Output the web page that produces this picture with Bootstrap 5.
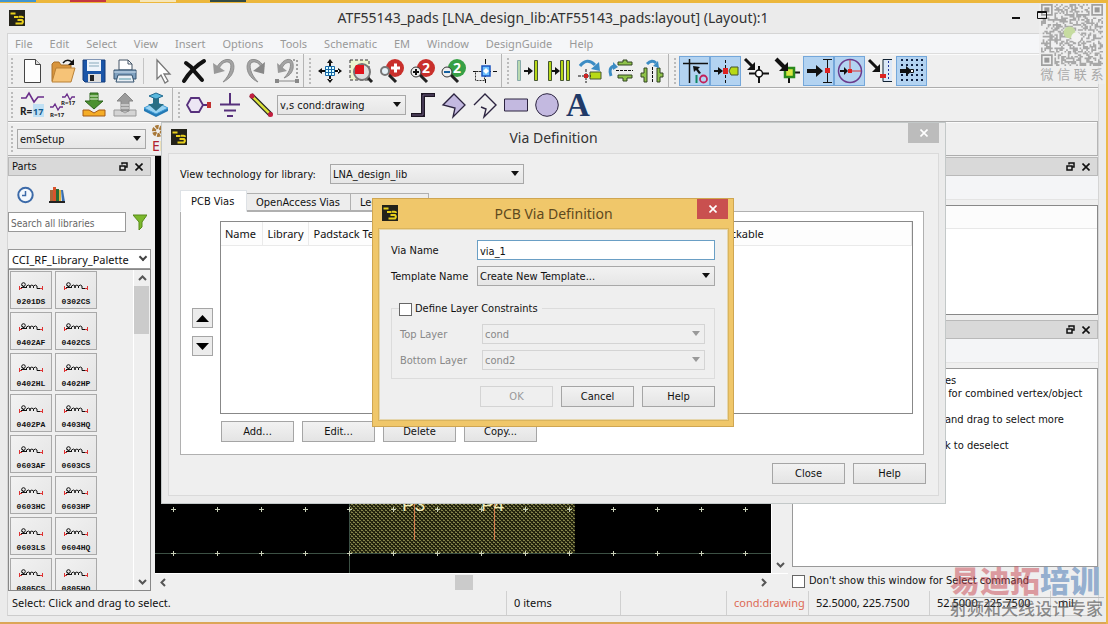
<!DOCTYPE html>
<html lang="en">
<head>
  <meta charset="UTF-8" />
  <meta name="viewport" content="width=device-width, initial-scale=1" />
  <title>ATF55143_pads (Layout):1</title>
  <link href="https://cdn.jsdelivr.net/npm/bootstrap@5.3.3/dist/css/bootstrap.min.css" rel="stylesheet" />
  <style>
    :root {
      --ui: "DejaVu Sans Condensed", "DejaVu Sans", sans-serif;
      --win: "Noto Sans", sans-serif;
      --line: #adadad;
    }
    body { font: 11px/14px var(--ui); color: #111; background: #ebebeb; height: 100vh; overflow: hidden; }
    svg { display: block; flex: none; }
    button { color: inherit; }

    /* window frame */
    .desk-top { height: 3px; background: #ecb73c; flex: none; gap: 34px; }
    .desk-top i { height: 2px; width: 36px; }
    .frame { border-right: 2px solid #ecb94a; min-height: 0; }
    .title-bar { height: 30px; padding: 0 45px 0 9px; flex: none; }
    .title-text { font: 14px/20px var(--win); color: #333; }
    .title-bar .title-text { padding-left: 72px; }
    .win-ctl { border: 0; background: none; padding: 0; width: 26px; height: 20px; position: relative; z-index: 5; }
    .inner { margin: 0 7px; border: 1px solid #d5d5d5; border-bottom-color: #ccc; background: #efefef; min-height: 0; }
    .menu-bar { height: 20px; background: #f5f6f8; padding-left: 7px; gap: 17px; border-bottom: 1px solid #ddd; flex: none; }
    .menu-bar a { font: 11px/19px var(--win); color: #999; text-decoration: none; }

    /* toolbars */
    .tool-row { height: 34px; border-bottom: 1px solid var(--line); box-shadow: inset 0 1px #fbfbfb; flex: none; }
    .tool-set { padding-left: 8px; border-right: 1px solid #b5b5b5; padding-right: 1px; }
    .tool-set + .tool-set { padding-left: 10px; }
    .tool-set.open-end { border-right: 0; }
    .tool-set::before { content: ""; width: 2px; height: 26px; margin-left: -5px; margin-right: 3px; background: repeating-linear-gradient(#bbb 0 2px, transparent 2px 4px); }
    .tool-btn { width: 31px; height: 30px; padding: 0; border: 1px solid transparent; background: none; display: flex; align-items: center; justify-content: center; flex: none; }
    .tool-btn svg { overflow: visible; }
    .tool-btn.on { background: #b3d3f1; border-color: #74a7da; }
    .tool-sep { width: 7px; height: 26px; border-left: 1px solid #c4c4c4; margin-left: 3px; margin-right: -3px; }
    .tool-pick { width: 129px; margin: 0 1px; }

    /* form controls */
    .form-select, .form-control { font: 11px/16px var(--ui); color: #111; border: 1px solid #a8a8a8; border-radius: 0; height: 20px; padding: 2px 2px 0; min-height: 0; }
    .form-select { appearance: none; background: linear-gradient(#f2f2f2, #e6e6e6); padding-right: 20px; }
    .form-select:disabled { background: #efefef; border-color: #d4d4d4; color: #888; }
    .pick { position: relative; }
    .pick::after { content: ""; position: absolute; right: 5px; top: 50%; margin-top: -3px; border: 4px solid transparent; border-top: 5px solid #111; border-bottom: 0; pointer-events: none; }
    .pick.dim::after { border-top-color: #999; }
    .pick.chevron::after { width: 6px; height: 6px; border: solid #444; border-width: 0 2px 2px 0; transform: rotate(45deg); margin-top: -5px; }
    .push { width: 73px; height: 21px; padding: 1px 0 0; font: 11px/14px var(--ui); border: 1px solid #a5a5a5; border-radius: 0; background: linear-gradient(#f2f2f2, #e4e4e4); color: #111; }
    .push:disabled { background: #efefef; border-color: #d4d4d4; color: #999; opacity: 1; }
    .nudge { width: 21px; height: 20px; padding: 0; border: 1px solid #a5a5a5; background: #ececec; display: grid; place-items: center; }
    .form-check-input { width: 13px; height: 13px; margin: 0; border: 1px solid #666; border-radius: 0 !important; flex: none; }

    /* docks */
    .dock-title { height: 19px; margin-top: 1px; background: #d9d9d9; border: 1px solid #b9b9b9; padding: 0 3px; flex: none; }
    .dock-title button { border: 0; background: none; padding: 0; width: 16px; height: 16px; display: grid; place-items: center; }
    .parts { width: 143px; flex: none; }
    .parts .form-select, .parts .form-control { border-color: #999; }
    .finder { padding: 9px 1px 0 9px; gap: 15px; }
    .finder button, .search button { border: 0; background: none; padding: 0; }
    .search { padding: 7px 4px 17px 0; }
    .search .form-control { width: 118px; font-size: 10px; }
    .search .form-control::placeholder { color: #666; }
    .palette .form-select { font: 11px/16px var(--win); background: #fff; padding: 2px 3px 0; }
    .part-box { border: 1px solid #888; min-height: 0; }
    .part-grid { padding: 1px; display: grid; grid-template-columns: 42px 42px; grid-auto-rows: 38px; gap: 3px; align-content: start; overflow: hidden; }
    .part { border: 1px solid #a9a9a9; background: linear-gradient(135deg, #f2f2f2, #e4e4e4); padding: 5px 0 0; font: bold 8px/12px "Liberation Mono", monospace; }
    .part svg { margin: 4px auto 5px; }
    .v-bar { width: 17px; border-left: 1px solid #fff; flex: none; }
    .v-thumb { width: 15px; height: 48px; background: #cbcbcb; }
    .scroll-end { height: 16px; display: grid; place-items: center; }
    .canvas-area { background: #000; overflow: hidden; }
    .h-bar { height: 18px; border-top: 1px solid #fff; }
    .h-thumb { width: 18px; height: 15px; background: #cbcbcb; }
    .right-dock { width: 306px; flex: none; }
    .strip { height: 24px; background: #f4f5f7; border-bottom: 1px solid #e4e4e4; flex: none; }
    .list-box { height: 110px; margin-top: 5px; margin-bottom: 4px; border: 1px solid #888; background: #fff; flex: none; }
    .list-head { height: 23px; background: #fcfcfc; border-bottom: 1px solid #e8e8e8; }
    .help-box { border: 1px solid #999; background: #fff; margin-top: 5px; padding: 5px 2px 0 152px; line-height: 13px; white-space: pre; min-height: 0; overflow: hidden; }
    .no-show { height: 24px; flex: none; gap: 4px; padding-top: 4px; }
    .status { height: 24px; font: 11px/16px var(--win); flex: none; }
    .status > div { border-left: 1px solid #d0d0d0; padding: 4px 0 4px 7px; }
    .status > div:first-child { border: 0; padding-left: 4px; }
    .status .item-cell { width: 114px; }
    .status .blank-cell { width: 106px; }
    .status .layer-cell { width: 82px; color: #dd6a55; white-space: nowrap; }
    .status .xy-cell { width: 121px; }
    .status .unit-cell { width: 48px; }
    .desk-foot { height: 8px; border-bottom: 2px solid #dba657; flex: none; }

    /* dialogs */
    .dlg { position: absolute; display: flex; flex-direction: column; }
    .dlg-title { height: 30px; flex: none; position: relative; }
    .dlg-x { position: absolute; top: 0; right: 0; width: 31px; height: 20px; border: 0; padding: 0; display: grid; place-items: center; background: #bcbcbc; }
    .dlg-logo { position: absolute; left: 3px; top: 6px; }
    .via-dlg { left: 161px; top: 122px; width: 785px; height: 382px; background: #ebebeb; border: 1px solid #c3c8c8; padding: 0 6px 7px; }
    .dlg-body { background: #efefef; border: 1px solid #dadada; padding: 10px 14px 0 11px; }
    .lib-row label { width: 150px; padding-top: 1px; }
    .lib-row .pick { width: 194px; }
    .nav-tabs { border: 0; margin-top: 6px; align-items: end; }
    .nav-tabs .nav-link { font: 11px/14px var(--ui); color: #111; border: 1px solid #b0b0b0; border-radius: 0; height: 18px; padding: 1px 0 0 9px; margin: 0 0 0 -1px; background: #ededed; }
    .nav-tabs .nav-link.active { width: 67px; height: 22px; padding: 2px 0 0 10px; margin: 0 0 -1px; border-bottom-color: #fff; background: #fff; color: #111; position: relative; z-index: 1; }
    .nav-tabs .oa-tab { width: 105px; }
    .nav-tabs .legacy-tab { width: 79px; }
    .tab-pane-box { height: 244px; border: 1px solid #b0b0b0; background: #fff; padding: 9px 10px 0 11px; }
    .arrows { width: 28px; padding-top: 87px; gap: 8px; flex: none; }
    .via-table { height: 193px; border: 1px solid #888; min-width: 0; }
    .via-table table { width: 100%; table-layout: fixed; margin: 0; }
    .via-table th { font: 11px/15px var(--win); padding: 4px 0 4px 5px; border-right: 1px solid #eaeaea; border-bottom: 1px solid #eaeaea; background: #fdfdfd; white-space: nowrap; overflow: hidden; }
    .via-table th:first-child { padding-left: 4px; }
    .via-actions { padding: 7px 0 0 29px; gap: 8px; }
    .end-row { padding-top: 8px; gap: 8px; }
    .via-dlg .end-row { margin-right: -2px; }

    .pcb-dlg { left: 372px; top: 198px; width: 362px; height: 229px; background: #f0c76a; border: 1px solid #cfa652; padding: 0 5px 6px 6px; }
    .pcb-dlg .title-text { color: #5e4a1e; }
    .pcb-dlg .dlg-x { background: #c9504f; }
    .pcb-body { background: #efefef; border: 1px solid #e5d6ae; outline: 1px solid #dbb55d; padding: 10px 12px 0 11px; }
    .pair { height: 26px; align-items: flex-start; }
    .pair label { width: 86px; line-height: 22px; flex: none; }
    .pair .form-control { border-color: #6a9fc5; }
    .limits { position: relative; border: 1px solid #dcdcdc; margin-top: 16px; height: 71px; padding: 15px 9px 0 8px; }
    .limits .pair label { width: 82px; color: #888; }
    .limits legend { position: absolute; top: -7px; left: 7px; width: auto; margin: 0; padding: 0 4px 0 0; background: #efefef; font: 11px/14px var(--ui); display: flex; gap: 3px; align-items: center; }
    .pcb-dlg .end-row { padding-top: 7px; }

    /* stamps over the window */
    .stamp { position: absolute; pointer-events: none; }
    .qr-stamp { left: 1039px; top: 4px; width: 66px; background: rgba(240, 240, 240, .7); text-align: center; font: 13px/18px "Liberation Sans", "Noto Sans CJK SC", sans-serif; color: #aaa; white-space: nowrap; }
    .brand-stamp { left: 950px; top: 566px; width: 154px; white-space: nowrap; font-family: "Liberation Sans", "Noto Sans CJK SC", sans-serif; }
    .brand-stamp b { display: block; font-size: 30px; line-height: 31px; font-weight: 900; color: rgba(200, 70, 80, .5); border-bottom: 1px solid #bbb; }
    .brand-stamp b span { color: rgba(70, 120, 180, .55); }
    .brand-stamp em { display: block; font-style: normal; font-weight: 500; font-size: 17px; line-height: 24px; color: rgba(80, 80, 80, .65); }
  </style>
</head>
<body class="d-flex flex-column">
  <svg width="0" height="0" class="position-absolute">
    <symbol id="logo" viewBox="0 0 16 16"><rect width="16" height="16" fill="#23221a"/><path d="M1.500 3.500h5M5 7h4.500M10 6.800h2.500q1.500 0 1.500 1.200M8.500 10h4.500q1.800 1.800 0 3.600H6.500" fill="none" stroke="#e8cf1c" stroke-width="2"/></symbol>
    <symbol id="float" viewBox="0 0 9 9"><path d="M3 2.500V1h5v4H6.500M1 4h5v4H1z" fill="none" stroke="#111" stroke-width="1.500"/></symbol>
    <symbol id="cross" viewBox="0 0 8 8"><path d="M.5.5l7 7M7.500.5l-7 7" stroke="currentColor" stroke-width="1.600"/></symbol>
    <symbol id="coil" viewBox="0 0 26 9"><path d="M1.500 4v4M24.500 4v4M1 6.500h3M22 6.500h3" stroke="#d33" fill="none"/><path d="M3 5.500h6M3.500 3L7 5.500M8.500 6V4q2-2 3.500 0v2V4q2-2 3.500 0v2V4q2-2 3.500 0v2.500h3" stroke="#111" fill="none"/><circle cx="5.500" cy="2.500" r="1.800" fill="none" stroke="#111"/></symbol>
    <symbol id="up" viewBox="0 0 9 6"><path d="M1 5l3.500-3.500L8 5" fill="none" stroke="#555" stroke-width="2"/></symbol>
    <symbol id="down" viewBox="0 0 9 6"><path d="M1 1l3.500 3.500L8 1" fill="none" stroke="#555" stroke-width="2"/></symbol>
  </svg>

  <div class="desk-top d-flex">
    <i style="background:#3f95cf"></i><i style="background:#c53640"></i><i style="background:#f6e6b8"></i><i style="background:#334a44"></i>
  </div>

  <div class="frame d-flex flex-column flex-grow-1">
    <div class="title-bar d-flex align-items-center">
      <svg width="16" height="16"><use href="#logo"/></svg>
      <div class="title-text flex-grow-1 text-center">ATF55143_pads [LNA_design_lib:ATF55143_pads:layout] (Layout):1</div>
      <button class="win-ctl" aria-label="Minimize"><svg width="20" height="16"><path d="M3 8h8" stroke="#111" stroke-width="2"/></svg></button>
      <button class="win-ctl" aria-label="Maximize"><svg width="14" height="16"><path d="M2.500 1.500h9v7h-9zM3 2.500h9" fill="none" stroke="#111"/></svg></button>
    </div>

    <div class="inner d-flex flex-column flex-grow-1">
      <nav class="menu-bar d-flex">
        <a href="#">File</a><a href="#">Edit</a><a href="#">Select</a><a href="#">View</a><a href="#">Insert</a><a href="#">Options</a><a href="#">Tools</a><a href="#">Schematic</a><a href="#">EM</a><a href="#">Window</a><a href="#">DesignGuide</a><a href="#">Help</a>
      </nav>

      <div class="tool-row d-flex">
        <div class="tool-set d-flex align-items-center">
          <button class="tool-btn" aria-label="New"><svg width="24" height="24"><path d="M4.500.5h11l5 5v18h-16z" fill="#fdfdfd" stroke="#444"/><path d="M15.500.5v5h5" fill="#ddd" stroke="#444"/></svg></button>
          <button class="tool-btn" aria-label="Open"><svg width="24" height="24"><path d="M1 22V5l2-2h5l2 3h10v4" fill="#d9953c" stroke="#a8702a"/><path d="M1 23L5 9h19l-4 14z" fill="#f6c377" stroke="#b98036"/><path d="M12 4q4-5 9-1" fill="none" stroke="#111" stroke-width="1.500"/><path d="M23 0v6h-6z" fill="#111"/></svg></button>
          <button class="tool-btn" aria-label="Save"><svg width="24" height="24"><path d="M1 1h22v22H3l-2-2z" fill="#1a55a8" stroke="#123a78"/><path d="M5 1h14v11H5z" fill="#eef4fa"/><path d="M7 4h10M7 7h10" stroke="#8ab"/><path d="M6 15h13v8H6z" fill="#ddd"/><path d="M8 16h4v6H8z" fill="#222"/></svg></button>
          <button class="tool-btn" aria-label="Print"><svg width="24" height="24"><path d="M6 11V1h9l4 4v6z" fill="#fff" stroke="#456"/><path d="M15 1v4h4" fill="none" stroke="#456"/><path d="M1 11h22v9H1z" fill="#7ea0bf" stroke="#34536e"/><path d="M1 13h22" stroke="#cfe0ef"/><path d="M5 16h14l2 7H3z" fill="#e8eef4" stroke="#34536e"/><path d="M6 20h12" stroke="#59a"/></svg></button>
          <span class="tool-sep"></span>
          <button class="tool-btn" aria-label="Pointer"><svg width="24" height="24"><path d="M6 1v19l4-4 4 8 3-2-4-7h6z" fill="#fff" stroke="#777" stroke-width="1.300"/></svg></button>
          <button class="tool-btn" aria-label="Delete"><svg width="24" height="24"><path d="M4 4l5 4 4 5 7 8" stroke="#111" stroke-width="4" fill="none" stroke-linecap="round"/><path d="M22 2Q10 9 2 22" stroke="#111" stroke-width="4" fill="none" stroke-linecap="round"/></svg></button>
          <button class="tool-btn" aria-label="Undo"><svg width="24" height="24"><path d="M6 10C9 2 15 2 17 4s1 11-7 19C23 17 22 5 19 2S8 0 4 8z" fill="#a4a4a4" stroke="#8d8d8d"/><path d="M0 4l1 11 11-3z" fill="#999"/></svg></button>
          <button class="tool-btn" aria-label="Redo"><svg width="24" height="24"><path d="M18 10C15 2 9 2 7 4S6 15 14 23C1 17 2 5 5 2S16 0 20 8z" fill="#a4a4a4" stroke="#8d8d8d"/><path d="M21 3l-1 12-11-3z" fill="#888"/></svg></button>
          <button class="tool-btn" aria-label="Undo list"><svg width="24" height="24"><path d="M7 9c3-6 7-6 8-5s1 8-6 15C20 15 19 5 17 2S8 0 5 7z" fill="#a4a4a4" stroke="#8d8d8d"/><path d="M2 4l1 10 9-2z" fill="#999"/><path d="M18 1h4v21" fill="none" stroke="#555" stroke-dasharray="2 2"/><path d="M1 22h21" stroke="#888"/><path d="M0 20h4v4H0zM20 20h4v4h-4z" fill="#888"/></svg></button>
        </div>
        <div class="tool-set d-flex align-items-center">
          <button class="tool-btn" aria-label="View all"><svg width="24" height="24"><path d="M12 0l3 4h-6zM12 24l3-4h-6zM0 12l4-3v6zM24 12l-4-3v6zM11 3h2v4h-2zM11 17h2v4h-2zM3 11h4v2H3zM17 11h4v2h-4z" fill="#111"/><path d="M7.500 7.500h9v9h-9zM10.500 7.500v9M13.500 7.500v9M7.500 10.500h9M7.500 13.500h9" fill="#dff" stroke="#1768a8"/></svg></button>
          <button class="tool-btn" aria-label="Zoom area"><svg width="24" height="24"><path d="M1 1h19v20H1z" fill="#edf5cf" stroke="#333" stroke-dasharray="3 2"/><path d="M18 18l5 5" stroke="#222" stroke-width="3"/><circle cx="13" cy="13" r="8" fill="#ddd" stroke="#777" stroke-width="2"/><path d="M7 6h8v9H6V8z" fill="#e0141b"/></svg></button>
          <button class="tool-btn" aria-label="Zoom in"><svg width="24" height="24"><circle cx="15" cy="9" r="9" fill="#c9302c"/><path d="M11 9h9M15.500 4.500v9" stroke="#fff" stroke-width="3"/><path d="M9 16l7 7" stroke="#222" stroke-width="3"/><circle cx="5" cy="12" r="4" fill="#e6f2f8" stroke="#777" stroke-width="2"/></svg></button>
          <button class="tool-btn" aria-label="Zoom in by 2"><svg width="24" height="24"><circle cx="15" cy="9" r="9" fill="#c9302c"/><text x="11" y="14" font-family="Noto Sans" font-weight="700" font-size="14" fill="#fff">2</text><path d="M9 16l7 7" stroke="#222" stroke-width="3"/><circle cx="5" cy="13" r="5" fill="#eee" stroke="#333"/><path d="M2 13h6M5 10v6" stroke="#111" stroke-width="2"/></svg></button>
          <button class="tool-btn" aria-label="Zoom out by 2"><svg width="24" height="24"><circle cx="15" cy="9" r="9" fill="#37a045"/><text x="11" y="14" font-family="Noto Sans" font-weight="700" font-size="14" fill="#fff">2</text><path d="M9 16l7 7" stroke="#222" stroke-width="3"/><circle cx="5" cy="13" r="5" fill="#eee" stroke="#333"/><path d="M2 13h6" stroke="#1360a0" stroke-width="2"/></svg></button>
          <button class="tool-btn" aria-label="Pan"><svg width="24" height="24"><path d="M12.500 0v24M0 12.500h24" stroke="#111" stroke-dasharray="5 2 1 2"/><path d="M2.500 12.500h9v9h-9z" fill="none" stroke="#333" stroke-dasharray="2 1"/><path d="M9 7h8v10H9z" fill="#6cc0ff" stroke="#1b54c0" stroke-width="1.500"/><path d="M13 9l3 3-3 3-3-3z" fill="#fff"/></svg></button>
        </div>
        <div class="tool-set d-flex align-items-center">
          <button class="tool-btn" aria-label="Move"><svg width="24" height="24"><path d="M1.500 1.500h3v20h-3z" fill="#b9d9b0" stroke="#8aa"/><path d="M18.500 1.500h3v20h-3z" fill="#b8d916" stroke="#453"/><path d="M8 11h4V8l5 4-5 4v-3H8z" fill="#111"/></svg></button>
          <button class="tool-btn" aria-label="Copy"><svg width="24" height="24"><path d="M1.500 2.500h3v19h-3zM13.500 1.500h3v20h-3zM19.500 1.500h3v20h-3z" fill="#b8d916" stroke="#453"/><path d="M5 11h3V8l5 4-5 4v-3H5z" fill="#111"/></svg></button>
          <button class="tool-btn" aria-label="Rotate"><svg width="24" height="24"><path d="M2 7q7-9 15-1" fill="none" stroke="#3c8cc4" stroke-width="3"/><path d="M21 3l1 9-9-2z" fill="#3c8cc4"/><path d="M12 13h11v7H12z" fill="#b8d916" stroke="#453"/><path d="M0 17h13M8 10v14" stroke="#111" stroke-dasharray="3 1"/><path d="M6 15h4v4H6z" fill="#c22"/></svg></button>
          <button class="tool-btn" aria-label="Mirror about X"><svg width="24" height="24"><path d="M9 6V3h5V1h4v2h5v3zM9 19v-3h14v3h-5v3h-4v-3z" fill="#8fc34a" stroke="#342"/><path d="M7 11.500h17" stroke="#111" stroke-dasharray="3 1"/><path d="M2 17Q-1 9 5 7" fill="none" stroke="#3c8cc4" stroke-width="3"/><path d="M4 3l5 5-5 3z" fill="#3c8cc4"/></svg></button>
          <button class="tool-btn" aria-label="Mirror about Y"><svg width="24" height="24"><path d="M4 9h3v14H4v-5H1v-4h3zM17 9h3v5h3v4h-3v5h-3z" fill="#8fc34a" stroke="#342"/><path d="M12.500 8v16" stroke="#111" stroke-dasharray="3 1"/><path d="M7 5q5-5 9-1" fill="none" stroke="#3c8cc4" stroke-width="3"/><path d="M18 2l1 7-6-2z" fill="#3c8cc4"/></svg></button>
        </div>
        <div class="tool-set open-end d-flex align-items-center">
          <button class="tool-btn on" aria-label="Origin"><svg width="28" height="26"><path d="M8.500 1v24M2 5.500h25" stroke="#111" stroke-width="1.500"/><path d="M12 8l7 1-2 2 3 4-2 1-3-4-2 2z" fill="#111"/><path d="M15.500 17v8" stroke="#186" stroke-width="2"/><circle cx="22.500" cy="21" r="3.500" fill="none" stroke="#c2205a" stroke-width="1.800"/></svg></button>
          <button class="tool-btn on" aria-label="Snap to pin"><svg width="24" height="24"><path d="M11.500 1v23" stroke="#111" stroke-dasharray="3 2"/><path d="M0 11h4V8l5 4-5 4v-3H0z" fill="#111"/><path d="M9 9h5v6H9z" fill="#d22"/><path d="M24 8h-7l-2 4 2 4h7z" fill="#b8d916" stroke="#453"/></svg></button>
          <button class="tool-btn" aria-label="Snap to vertex"><svg width="24" height="24"><path d="M0 0l8 8" stroke="#111" stroke-width="3"/><path d="M10 3v8H2z" fill="#111"/><path d="M14 7v17M4 14.500h20" stroke="#111" stroke-width="2"/><circle cx="14" cy="14.500" r="3.500" fill="#fff" stroke="#111" stroke-width="1.500"/></svg></button>
          <button class="tool-btn" aria-label="Snap to edge"><svg width="24" height="24"><path d="M0 0l9 9" stroke="#111" stroke-width="4"/><path d="M13 14v10M14 13.500h10" stroke="#111" stroke-width="2"/><path d="M9 9h9v9H9z" fill="#d8e640" stroke="#2b8a1c" stroke-width="2.500"/><path d="M12 3v9H3z" fill="#111"/></svg></button>
          <button class="tool-btn on" aria-label="Snap to middle"><svg width="26" height="26"><path d="M1 11h9V7l7 6-7 6v-4H1z" fill="#111"/><path d="M17 1.500h9M17 24.500h9M21.500 1v24" stroke="#111"/><path d="M19 10h5v5h-5z" fill="#d22"/></svg></button>
          <button class="tool-btn on" aria-label="Snap to centre"><svg width="26" height="26"><circle cx="13" cy="13" r="11.500" fill="none" stroke="#6a3a8c" stroke-width="1.500"/><path d="M13 2v11h11" fill="none" stroke="#d33"/><path d="M3 12h4V9l4 4-4 4v-3H3z" fill="#111"/><path d="M11 11h4v4h-4z" fill="#d22"/></svg></button>
          <button class="tool-btn" aria-label="Snap to intersection"><svg width="24" height="24"><path d="M0 1l8 8" stroke="#111" stroke-width="3"/><path d="M11 5v8H3z" fill="#111"/><path d="M23 .5h-9v22h9" fill="#dbe8f8" stroke="#123"/><path d="M19.500 2v20" stroke="#239" stroke-dasharray="2 2"/><path d="M11 15h6v4h-6z" fill="#d22"/></svg></button>
          <button class="tool-btn on" aria-label="Snap to grid"><svg width="26" height="26"><path d="M3 1v24M8 1v24M13 1v24M18 1v24M23 1v24" stroke="#124" stroke-width="2" stroke-dasharray="2 3"/><path d="M1 11h6V8l6 5-6 5v-3H1z" fill="#111"/><path d="M11.500 11.500h3v3h-3z" fill="#fff" stroke="#111"/></svg></button>
        </div>
      </div>

      <div class="tool-row d-flex">
        <div class="tool-set d-flex align-items-center">
          <button class="tool-btn" aria-label="Edit value"><svg width="24" height="26"><path d="M1 6h5l3-5 5 9 4-5h6" fill="none" stroke="#6a2d8a" stroke-width="1.600"/><rect x="13" y="12" width="11" height="13" fill="#bfe0f4"/><text x="0" y="23" font-family="Noto Sans" font-weight="700" font-size="10" fill="#222">R=</text><text x="13" y="23" font-family="Noto Sans" font-weight="700" font-size="9" fill="#125a8c">17</text></svg></button>
          <button class="tool-btn" aria-label="Edit values"><svg width="26" height="26"><path d="M12 5h3l2-3 3 6 2-3h3M0 15h3l2-3 3 6 2-3h3" fill="none" stroke="#6a2d8a" stroke-width="1.300"/><text x="11" y="13" font-family="Noto Sans" font-weight="700" font-size="6" fill="#222">R=17</text><text x="0" y="25" font-family="Noto Sans" font-weight="700" font-size="6" fill="#222">R=17</text></svg></button>
          <button class="tool-btn" aria-label="Push into"><svg width="24" height="24"><path d="M1 17h6l5 3 5-3h6v6H1z" fill="#f5ad27" stroke="#a45a16"/><path d="M8 0h8v8h5l-9 8-9-8h5z" fill="#4c9130" stroke="#2c641c"/><path d="M8 3h8M8 6h8" stroke="#e6f4da"/></svg></button>
          <button class="tool-btn" aria-label="Pop out"><svg width="24" height="24"><path d="M1 17h6l5 3 5-3h6v6H1z" fill="#d4d4d4" stroke="#999"/><path d="M12 0l8 8h-4v10H8V8H4z" fill="#9b9b9b" stroke="#888"/><path d="M8 12h8M8 15h8" stroke="#eee"/></svg></button>
          <button class="tool-btn" aria-label="Layers"><svg width="24" height="24"><path d="M0 15v3l12 6 12-6v-3z" fill="#2479b4"/><path d="M0 15l12-6 12 6-12 6z" fill="#9ad3f2" stroke="#3e9bd6"/><path d="M9 5h6v6h5l-8 7-8-7h5z" fill="#286e84"/><path d="M5 3l7-3 7 3-7 3z" fill="#59b8de" stroke="#226a90"/></svg></button>
        </div>
        <div class="tool-set open-end d-flex align-items-center">
          <button class="tool-btn" aria-label="Insert pin"><svg width="26" height="24"><path d="M5 5h8l4 7-4 7H5l-4-7z" fill="#ece6f4" stroke="#57307c" stroke-width="1.800"/><path d="M17 12h4" stroke="#57307c" stroke-width="2"/><path d="M21 9h4v6h-4z" fill="#c03030"/></svg></button>
          <button class="tool-btn" aria-label="Insert ground"><svg width="24" height="24"><path d="M12 0v11M2 11.500h20M6 17.500h12M9 23h6" stroke="#57307c" stroke-width="2"/></svg></button>
          <button class="tool-btn" aria-label="Insert wire"><svg width="24" height="24"><path d="M2 2l20 20" stroke="#222" stroke-width="5"/><path d="M4 4l16 16" stroke="#d9e03a" stroke-width="2.500"/><circle cx="3" cy="3" r="2.500" fill="#c22040"/><circle cx="21.500" cy="21.500" r="2.500" fill="#c22040"/></svg></button>
          <div class="pick tool-pick"><select class="form-select" aria-label="Entry layer"><option>v,s cond:drawing</option></select></div>
          <button class="tool-btn" aria-label="Trace"><svg width="24" height="24"><path d="M0 22h12V2h12" fill="none" stroke="#1d1624" stroke-width="4"/><path d="M1 22h11V2h11" fill="none" stroke="#6c5a80" stroke-width="1"/></svg></button>
          <button class="tool-btn" aria-label="Polygon"><svg width="24" height="24"><path d="M12 1l11 11-12 12 2-9-12-3z" fill="#c3b9e0" stroke="#2c2440" stroke-width="1.300"/></svg></button>
          <button class="tool-btn" aria-label="Polyline"><svg width="24" height="24"><path d="M1 12L12 1l11 11-12 12 2-8-5-2" fill="none" stroke="#2c2440" stroke-width="1.400"/></svg></button>
          <button class="tool-btn" aria-label="Rectangle"><svg width="24" height="24"><path d="M.5 6h23v12H.5z" fill="#c3b9e0" stroke="#2c2440"/></svg></button>
          <button class="tool-btn" aria-label="Circle"><svg width="24" height="24"><circle cx="12" cy="12" r="11.300" fill="#c3b9e0" stroke="#2c2440"/></svg></button>
          <button class="tool-btn" aria-label="Text"><svg width="24" height="24"><text x="0" y="23" font-family="Liberation Serif" font-weight="700" font-size="33" fill="#1f3a68">A</text></svg></button>
        </div>
      </div>

      <div class="tool-row d-flex">
        <div class="tool-set d-flex align-items-center flex-grow-1">
          <div class="pick tool-pick"><select class="form-select" aria-label="EM setup"><option>emSetup</option></select></div>
          <button class="tool-btn" aria-label="EM settings"><svg width="26" height="28"><circle cx="8" cy="6" r="4" fill="none" stroke="#a87838" stroke-width="4" stroke-dasharray="3 1"/><text x="2" y="26" font-family="Noto Sans" font-size="14" fill="#b02030">EM</text></svg></button>
        </div>
      </div>

      <div class="d-flex flex-grow-1 overflow-hidden">
        <!-- parts palette -->
        <div class="parts d-flex flex-column">
          <div class="dock-title d-flex align-items-center"><span class="flex-grow-1">Parts</span><button aria-label="Float"><svg width="9" height="9"><use href="#float"/></svg></button><button aria-label="Close"><svg width="8" height="8"><use href="#cross"/></svg></button></div>
          <div class="finder d-flex">
            <button aria-label="Recent"><svg width="17" height="20"><circle cx="8.500" cy="10" r="7.200" fill="#f4f8fc" stroke="#3c6aa8" stroke-width="2"/><path d="M8.500 6v4.500H5" fill="none" stroke="#3c6aa8" stroke-width="1.500"/></svg></button>
            <button aria-label="Libraries"><svg width="16" height="20"><path d="M1 5h3v12H1z" fill="#a8683a"/><path d="M4 2h3v15H4z" fill="#d8532c"/><path d="M7 4h3v13H7z" fill="#276a34"/><path d="M10 5h2v12h-2z" fill="#e0b23c"/><path d="M12 5h2l2 12h-3z" fill="#3a6fae"/><path d="M0 17h16" stroke="#222" stroke-width="2"/></svg></button>
          </div>
          <div class="search d-flex align-items-center justify-content-between">
            <input class="form-control" placeholder="Search all libraries" aria-label="Search all libraries" />
            <button aria-label="Filter"><svg width="14" height="16"><path d="M0 1h14L9 8v5l-3 3V8z" fill="#7cb82c" stroke="#578a18"/></svg></button>
          </div>
          <div class="palette pick chevron"><select class="form-select w-100" aria-label="Palette"><option>CCI_RF_Library_Palette</option></select></div>
          <div class="part-box d-flex flex-grow-1">
            <div class="part-grid flex-grow-1" id="partGrid"></div>
            <div class="v-bar d-flex flex-column">
              <div class="scroll-end"><svg width="9" height="6"><use href="#up"/></svg></div>
              <div class="v-thumb"></div>
              <div class="scroll-end mt-auto"><svg width="9" height="6"><use href="#down"/></svg></div>
            </div>
          </div>
        </div>

        <!-- layout canvas -->
        <div class="d-flex flex-column flex-grow-1 ps-1 overflow-hidden">
          <div class="d-flex flex-grow-1 overflow-hidden">
            <div class="canvas-area flex-grow-1"><svg id="board" width="100%" height="100%"></svg></div>
            <div class="v-bar d-flex align-items-end justify-content-center"><div class="scroll-end"><svg width="9" height="6"><use href="#down"/></svg></div></div>
          </div>
          <div class="h-bar d-flex align-items-center justify-content-between pe-3">
            <svg width="16" height="9"><path d="M10 1L6.500 4.500 10 8" fill="none" stroke="#555" stroke-width="2"/></svg>
            <div class="h-thumb"></div>
            <svg width="16" height="9"><path d="M6 1l3.500 3.500L6 8" fill="none" stroke="#555" stroke-width="2"/></svg>
          </div>
        </div>

        <div class="right-dock d-flex flex-column ms-1">
          <div class="dock-title d-flex align-items-center justify-content-end"><button aria-label="Float"><svg width="9" height="9"><use href="#float"/></svg></button><button aria-label="Close"><svg width="8" height="8"><use href="#cross"/></svg></button></div>
          <div class="strip"></div>
          <div class="list-box"><div class="list-head"></div></div>
          <div class="dock-title d-flex align-items-center justify-content-end"><button aria-label="Float"><svg width="9" height="9"><use href="#float"/></svg></button><button aria-label="Close"><svg width="8" height="8"><use href="#cross"/></svg></button></div>
          <div class="strip"></div>
          <div class="help-box flex-grow-1">es
 for combined vertex/object

and drag to select more

k to deselect</div>
          <div class="no-show d-flex align-items-center"><input class="form-check-input" type="checkbox" id="noShow" /><label for="noShow">Don't show this window for Select command</label></div>
        </div>
      </div>

      <div class="status d-flex">
        <div class="flex-grow-1">Select: Click and drag to select.</div>
        <div class="item-cell">0 items</div>
        <div class="blank-cell"></div>
        <div class="layer-cell">cond:drawing</div>
        <div class="xy-cell">52.5000, 225.7500</div>
        <div class="xy-cell">52.5000, 225.7500</div>
        <div class="unit-cell">mil</div>
      </div>
    </div>
    <div class="desk-foot"></div>
  </div>

  <!-- Via Definition -->
  <div class="dlg via-dlg">
    <div class="dlg-title d-flex align-items-center justify-content-center">
      <svg class="dlg-logo" width="16" height="16"><use href="#logo"/></svg>
      <div class="title-text">Via Definition</div>
      <button class="dlg-x text-white" aria-label="Close"><svg width="8" height="8"><use href="#cross"/></svg></button>
    </div>
    <div class="dlg-body flex-grow-1">
      <div class="lib-row d-flex align-items-center">
        <label for="lib">View technology for library:</label>
        <div class="pick"><select class="form-select" id="lib"><option>LNA_design_lib</option></select></div>
      </div>
      <div class="nav nav-tabs">
        <button class="nav-link active text-start">PCB Vias</button>
        <button class="nav-link oa-tab text-start">OpenAccess Vias</button>
        <button class="nav-link legacy-tab text-start">Legacy Vias</button>
      </div>
      <div class="tab-pane-box">
        <div class="d-flex">
          <div class="arrows d-flex flex-column">
            <button class="nudge" aria-label="Move up"><svg width="13" height="7"><path d="M0 7l6.500-7L13 7z"/></svg></button>
            <button class="nudge" aria-label="Move down"><svg width="13" height="7"><path d="M0 0l6.500 7L13 0z"/></svg></button>
          </div>
          <div class="via-table flex-grow-1">
            <table>
              <colgroup><col style="width:41px" /><col style="width:46px" /><col style="width:401px" /><col /></colgroup>
              <thead><tr><th>Name</th><th>Library</th><th>Padstack Template</th><th>Stackable</th></tr></thead>
            </table>
          </div>
        </div>
        <div class="via-actions d-flex">
          <button class="push">Add...</button><button class="push">Edit...</button><button class="push">Delete</button><button class="push">Copy...</button>
        </div>
      </div>
      <div class="end-row d-flex justify-content-end"><button class="push">Close</button><button class="push">Help</button></div>
    </div>
  </div>

  <!-- PCB Via Definition -->
  <div class="dlg pcb-dlg">
    <div class="dlg-title d-flex align-items-center justify-content-center">
      <svg class="dlg-logo" width="16" height="16"><use href="#logo"/></svg>
      <div class="title-text">PCB Via Definition</div>
      <button class="dlg-x text-white" aria-label="Close"><svg width="8" height="8"><use href="#cross"/></svg></button>
    </div>
    <div class="pcb-body flex-grow-1">
      <div class="pair d-flex"><label for="viaName">Via Name</label><input class="form-control" id="viaName" value="via_1" /></div>
      <div class="pair d-flex"><label for="tpl">Template Name</label><div class="pick flex-grow-1"><select class="form-select" id="tpl"><option>Create New Template...</option></select></div></div>
      <fieldset class="limits">
        <legend><input class="form-check-input" type="checkbox" id="limit" /><label for="limit">Define Layer Constraints</label></legend>
        <div class="pair d-flex"><label for="topL">Top Layer</label><div class="pick dim flex-grow-1"><select class="form-select" id="topL" disabled><option>cond</option></select></div></div>
        <div class="pair d-flex"><label for="botL">Bottom Layer</label><div class="pick dim flex-grow-1"><select class="form-select" id="botL" disabled><option>cond2</option></select></div></div>
      </fieldset>
      <div class="end-row d-flex justify-content-end"><button class="push" disabled>OK</button><button class="push">Cancel</button><button class="push">Help</button></div>
    </div>
  </div>

  <div class="stamp qr-stamp"><svg id="qr" class="mx-auto" width="62" height="62" viewBox="0 0 37 37"></svg>微 信 联 系</div>
  <div class="stamp brand-stamp"><b>易迪拓<span>培训</span></b><em>射频和天线设计专家</em></div>

  <script src="https://cdn.jsdelivr.net/npm/bootstrap@5.3.3/dist/js/bootstrap.bundle.min.js"></script>
  <script>
    const parts = ['0201DS', '0302CS', '0402AF', '0402CS', '0402HL', '0402HP', '0402PA', '0403HQ',
      '0603AF', '0603CS', '0603HC', '0603HP', '0603LS', '0604HQ', '0805CS', '0805HQ'];
    document.getElementById('partGrid').innerHTML = parts.map(p =>
      `<button class="part"><svg width="26" height="9"><use href="#coil"/></svg>${p}</button>`).join('');

    // grid crosses every 44 px, ground plane and the two pins
    let s = `<defs><pattern id="hatch" width="4" height="4" patternUnits="userSpaceOnUse">
      <rect width="4" height="4" fill="#22220e"/><path d="M0 0h2v1H0zM2 2h2v1H2z" fill="#85854a"/><path d="M2 1h1v1H2zM0 3h1v1H0z" fill="#5a5a32"/></pattern></defs>
      <rect x="194" y="200" width="226" height="197" fill="url(#hatch)"/>
      <path d="M0 397.500h620M194.500 200v220" stroke="#3c5044"/>
      <path d="M259.500 340v44M339.500 340v44" stroke="#d87a4c"/>
      <g font-family="Liberation Sans" font-size="19" fill="#efeab8"><text x="247" y="355">P3</text><text x="326" y="355">P4</text></g>`;
    let d = '';
    for (let x = 18; x < 620; x += 44) {
      for (let y = 1; y < 420; y += 44) d += `M${x - 2} ${y + .5}h5M${x + .5} ${y - 2}v5`;
    }
    document.getElementById('board').innerHTML = s + `<path d="${d}" stroke="#c8d0b8"/>`;

    // QR block: three finders plus a data field
    let q = '', seed = 7;
    const inFinder = (x, y) => (x < 8 && y < 8) || (x > 28 && y < 8) || (x < 8 && y > 28);
    for (let y = 0; y < 37; y++) {
      for (let x = 0; x < 37; x++) {
        seed = (seed * 1103515245 + 12345) % 2147483648;
        if (!inFinder(x, y) && seed / 2147483648 > .5) q += `M${x} ${y}h1v1h-1z`;
      }
    }
    const finder = (x, y) => `<path d="M${x + .5} ${y + .5}h6v6h-6z" fill="none" stroke="#a0a0a0"/><path d="M${x + 2} ${y + 2}h3v3h-3z" fill="#999"/>`;
    document.getElementById('qr').innerHTML = `<path d="${q}" fill="#a8a8a8"/>` + finder(0, 0) + finder(30, 0) + finder(0, 30)
      + '<circle cx="17" cy="17" r="3.500" fill="#c6dca0"/><circle cx="21" cy="20" r="3" fill="#f2f2f2"/>';
  </script>
</body>
</html>
